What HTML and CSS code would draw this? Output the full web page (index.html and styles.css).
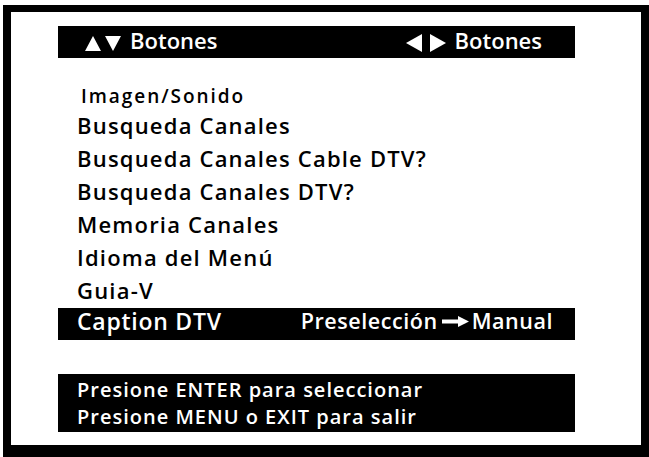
FILE: index.html
```html
<!DOCTYPE html>
<html lang="es">
<head>
<meta charset="utf-8">
<title>Menú Canales</title>
<link rel="stylesheet" href="styles.css">
</head>
<body>
<div class="screen">
  <div class="header">
    <div class="hgroup">
      <svg class="tri" width="16" height="15" viewBox="0 0 16 15"><polygon points="0,15 8,0 16,15" fill="#fff"/></svg>
      <svg class="tri tri-gap" width="16" height="15" viewBox="0 0 16 15"><polygon points="0,0 16,0 8,15" fill="#fff"/></svg>
      <span class="hlabel">Botones</span>
    </div>
    <div class="hgroup">
      <svg class="tri-lr" width="16" height="18" viewBox="0 0 16 18"><polygon points="16,0 16,18 0,9" fill="#fff"/></svg>
      <svg class="tri-lr tri-gap-lr" width="16" height="18" viewBox="0 0 16 18"><polygon points="0,0 16,9 0,18" fill="#fff"/></svg>
      <span class="hlabel">Botones</span>
    </div>
  </div>
  <ul class="menu">
    <li class="sub">Imagen/Sonido</li>
    <li>Busqueda Canales</li>
    <li>Busqueda Canales Cable DTV?</li>
    <li>Busqueda Canales DTV?</li>
    <li>Memoria Canales</li>
    <li>Idioma del Menú</li>
    <li>Guia-V</li>
    <li class="selected">
      <span>Caption DTV</span>
      <span class="value">Preselección<svg class="arrow" width="27" height="11" viewBox="0 0 27 11"><path d="M0 3.5 H16 V0 L27 5.5 L16 11 V7.5 H0 Z" fill="#fff"/></svg>Manual</span>
    </li>
  </ul>
  <div class="help">
    <div>Presione ENTER para seleccionar</div>
    <div>Presione MENU o EXIT para salir</div>
  </div>
</div>
</body>
</html>
```
FILE: styles.css
```css
html, body {
  margin: 0;
  padding: 0;
  background: #fff;
}

.screen {
  box-sizing: border-box;
  width: 646px;
  height: 452px;
  margin: 5px 0 0 3px;
  border-style: solid;
  border-color: #000;
  border-width: 7px 8px 12px 8px;
  padding: 14px 66px 0 47px;
  font-family: "Open Sans", "Noto Sans", sans-serif;
  font-weight: 600;
  color: #000;
}

.header {
  display: flex;
  justify-content: space-between;
  align-items: center;
  height: 32px;
  background: #000;
  color: #fff;
  padding: 0 33px 0 27px;
  font-size: 22px;
}

.hgroup {
  display: flex;
  align-items: center;
}

.tri {
  display: block;
  margin-top: 2px;
}

.tri-gap {
  margin-left: 4px;
}

.tri-lr {
  display: block;
  margin-top: 1px;
}

.tri-gap-lr {
  margin-left: 8px;
}

.hlabel {
  margin-left: 9px;
  line-height: 29px;
  padding-bottom: 3px;
}

.menu {
  list-style: none;
  margin: 26px 0 0;
  padding: 0;
}

.menu li {
  font-size: 22px;
  line-height: 33px;
  padding-left: 19px;
  letter-spacing: 1.2px;
}

.menu .sub {
  font-size: 19px;
  line-height: 25px;
  padding-left: 23px;
  letter-spacing: 1.95px;
}

.menu .selected {
  box-sizing: border-box;
  display: flex;
  justify-content: space-between;
  height: 32px;
  margin-top: 1px;
  background: #000;
  color: #fff;
  font-size: 23px;
  line-height: 26px;
  padding: 0 22px 6px 19px;
  letter-spacing: 0.75px;
}

.value {
  display: flex;
  align-items: center;
  font-size: 21.5px;
  letter-spacing: 0.55px;
}

.arrow {
  display: block;
  margin: 1px 3px 0 4px;
}

.help {
  box-sizing: border-box;
  height: 58px;
  margin-top: 34px;
  background: #000;
  color: #fff;
  font-size: 20px;
  line-height: 27.3px;
  padding: 1.6px 0 0 19px;
  letter-spacing: 1px;
}
```
